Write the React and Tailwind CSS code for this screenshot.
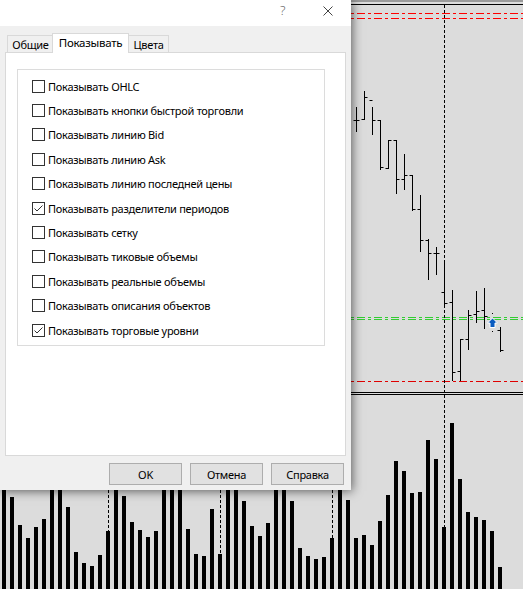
import React from 'react'

// верх столбиков объёма (y), по одному на бар, шаг 8px
const volumes = [
  470, 497, 525, 538, 527, 519, 470, 470, 507, 552, 563, 566, 555, 531, 470, 496,
  522, 530, 537, 531, 470, 470, 470, 529, 554, 556, 509, 554, 470, 470, 501, 526,
  536, 523, 480, 480, 501, 548, 556, 559, 557, 538, 480, 500, 538, 535, 545, 521,
  495, 461, 471, 493, 492, 440, 459, 527, 423, 479, 512, 517, 520, 531, 567
]

// [index, high, low, open, close]
const bars = [
  [44, 107, 131, 120, 120],
  [45, 91, 119, 119, 97],
  [46, 107, 134, 100, 120],
  [47, 120, 169, 120, 167],
  [48, 140, 168, 168, 140],
  [49, 140, 193, 140, 179],
  [50, 154, 189, 179, 175],
  [51, 175, 210, 175, 209],
  [52, 195, 251, 209, 240],
  [53, 239, 279, 240, 253],
  [54, 247, 274, 253, 253],
  [55, 262, 305, 292, 303],
  [56, 290, 380, 302, 372],
  [57, 339, 380, 371, 339],
  [58, 310, 349, 339, 315],
  [59, 291, 322, 314, 311],
  [60, 288, 328, 310, 316],
  [62, 327, 351, 330, 350]
]

const options = [
  { label: 'Показывать OHLC', checked: false },
  { label: 'Показывать кнопки быстрой торговли', checked: false },
  { label: 'Показывать линию Bid', checked: false },
  { label: 'Показывать линию Ask', checked: false },
  { label: 'Показывать линию последней цены', checked: false },
  { label: 'Показывать разделители периодов', checked: true },
  { label: 'Показывать сетку', checked: false },
  { label: 'Показывать тиковые объемы', checked: false },
  { label: 'Показывать реальные объемы', checked: false },
  { label: 'Показывать описания объектов', checked: false },
  { label: 'Показывать торговые уровни', checked: true }
]

function Chart() {
  const dashDot = '8 3 3 3'
  return (
    <svg width="523" height="589" className="block">
      <rect width="523" height="589" fill="#dcdcdc" />
      <rect x="0" y="0" width="523" height="2" fill="#9a9a9a" />
      <line x1="0" y1="4.5" x2="523" y2="4.5" stroke="#000" />

      {/* уровни */}
      <line x1="0" y1="13.5" x2="523" y2="13.5" stroke="#ff0000" strokeDasharray={dashDot} />
      <line x1="0" y1="18.5" x2="523" y2="18.5" stroke="#ff0000" strokeDasharray={dashDot} />
      <line x1="0" y1="317.5" x2="523" y2="317.5" stroke="#32cd32" strokeDasharray={dashDot} />
      <line x1="0" y1="319.5" x2="523" y2="319.5" stroke="#32cd32" strokeDasharray={dashDot} />
      <line x1="0" y1="381.5" x2="523" y2="381.5" stroke="#e00000" strokeDasharray={dashDot} />

      {/* разделители периодов */}
      {[108.5, 220.5, 332.5, 444.5].map((x) => (
        <line key={x} x1={x} y1="5" x2={x} y2="589" stroke="#000" strokeDasharray="3 2" />
      ))}

      {/* граница подокна */}
      <line x1="0" y1="392.5" x2="523" y2="392.5" stroke="#000" />
      <line x1="0" y1="394.5" x2="523" y2="394.5" stroke="#000" />

      {/* объемы */}
      {volumes.map((top, k) => (
        <rect key={k} x={2 + 8 * k} y={top} width="4" height={589 - top} fill="#000" />
      ))}

      {/* бары */}
      {bars.map(([k, hi, lo, op, cl]) => {
        const x = 4 + 8 * k + 0.5
        return (
          <g key={k} stroke="#000" strokeWidth="1">
            <line x1={x} y1={hi} x2={x} y2={lo + 1} />
            <line x1={x - 3} y1={op + 0.5} x2={x} y2={op + 0.5} />
            <line x1={x} y1={cl + 0.5} x2={x + 3} y2={cl + 0.5} />
          </g>
        )
      })}

      {/* стрелка сделки */}
      <rect x="492" y="313" width="1" height="1" fill="#000" />
      <rect x="492" y="331" width="1" height="1" fill="#000" />
      <polygon
        points="492.5,318 497.5,323 495,323 495,327.5 490,327.5 490,323 487.5,323"
        fill="#0b5cc0"
        stroke="#fff"
        strokeWidth="1"
      />
    </svg>
  )
}

function Checkbox({ checked }) {
  return (
    <div className="w-[13px] h-[13px] border border-[#333] bg-white flex items-center justify-center shrink-0">
      {checked && (
        <svg width="11" height="11" viewBox="0 0 11 11">
          <polyline points="1.5,5.5 4,8 9.5,2.5" fill="none" stroke="#333" strokeWidth="1" />
        </svg>
      )}
    </div>
  )
}

export default function App() {
  return (
    <div className="relative w-[523px] h-[589px] overflow-hidden font-['Noto_Sans',sans-serif] text-[11px] tracking-[-0.28px] text-black">
      <Chart />

      {/* --- ДИАЛОГ СВОЙСТВ --- */}
      <div className="absolute left-0 top-0 w-[351px] h-[490px] bg-[#f0f0f0] flex flex-col shadow-[1px_1px_10px_rgba(0,0,0,0.6)]">
        <div className="h-[26px] bg-white flex justify-end shrink-0">
          <div className="w-[45px] flex justify-center pt-[1px] text-[13px] leading-[18px] font-light text-[#666]">?</div>
          <div className="w-[46px] flex justify-center pt-[6px]">
            <svg width="10" height="10" viewBox="0 0 10 10">
              <path d="M0.5 0.5 L9.5 9.5 M9.5 0.5 L0.5 9.5" stroke="#444" strokeWidth="1" />
            </svg>
          </div>
        </div>

        {/* вкладки */}
        <div className="mt-[7px] ml-[7px] h-[20px] flex items-end relative z-10 -mb-[1px]">
          <div className="w-[47px] h-[17px] mb-[1px] border border-b-0 border-[#d9d9d9] flex items-center justify-center leading-none">
            Общие
          </div>
          <div className="-ml-[2px] w-[77px] h-[20px] bg-white border border-b-0 border-[#d9d9d9] flex items-center justify-center leading-none pb-[1px] text-[11.5px]">
            Показывать
          </div>
          <div className="w-[40px] h-[17px] mb-[1px] border border-b-0 border-l-0 border-[#d9d9d9] flex items-center justify-center leading-none">
            Цвета
          </div>
        </div>

        <div className="mx-[5px] h-[404px] bg-white border border-[#d9d9d9]">
          <div className="ml-[11px] mt-[16px] w-[308px] h-[277px] border border-[#dcdcdc] pt-[4px] pl-[14px]">
            {options.map((o) => (
              <div key={o.label} className="h-[24.4px] flex items-center">
                <Checkbox checked={o.checked} />
                <span className="ml-[3px] leading-none">{o.label}</span>
              </div>
            ))}
          </div>
        </div>

        <div className="mt-[7px] pr-[7px] flex justify-end gap-[8px]">
          {['OK', 'Отмена', 'Справка'].map((b) => (
            <div
              key={b}
              className="w-[73px] h-[22px] bg-[#e1e1e1] border border-[#adadad] flex items-center justify-center leading-none"
            >
              {b}
            </div>
          ))}
        </div>
      </div>
    </div>
  )
}
